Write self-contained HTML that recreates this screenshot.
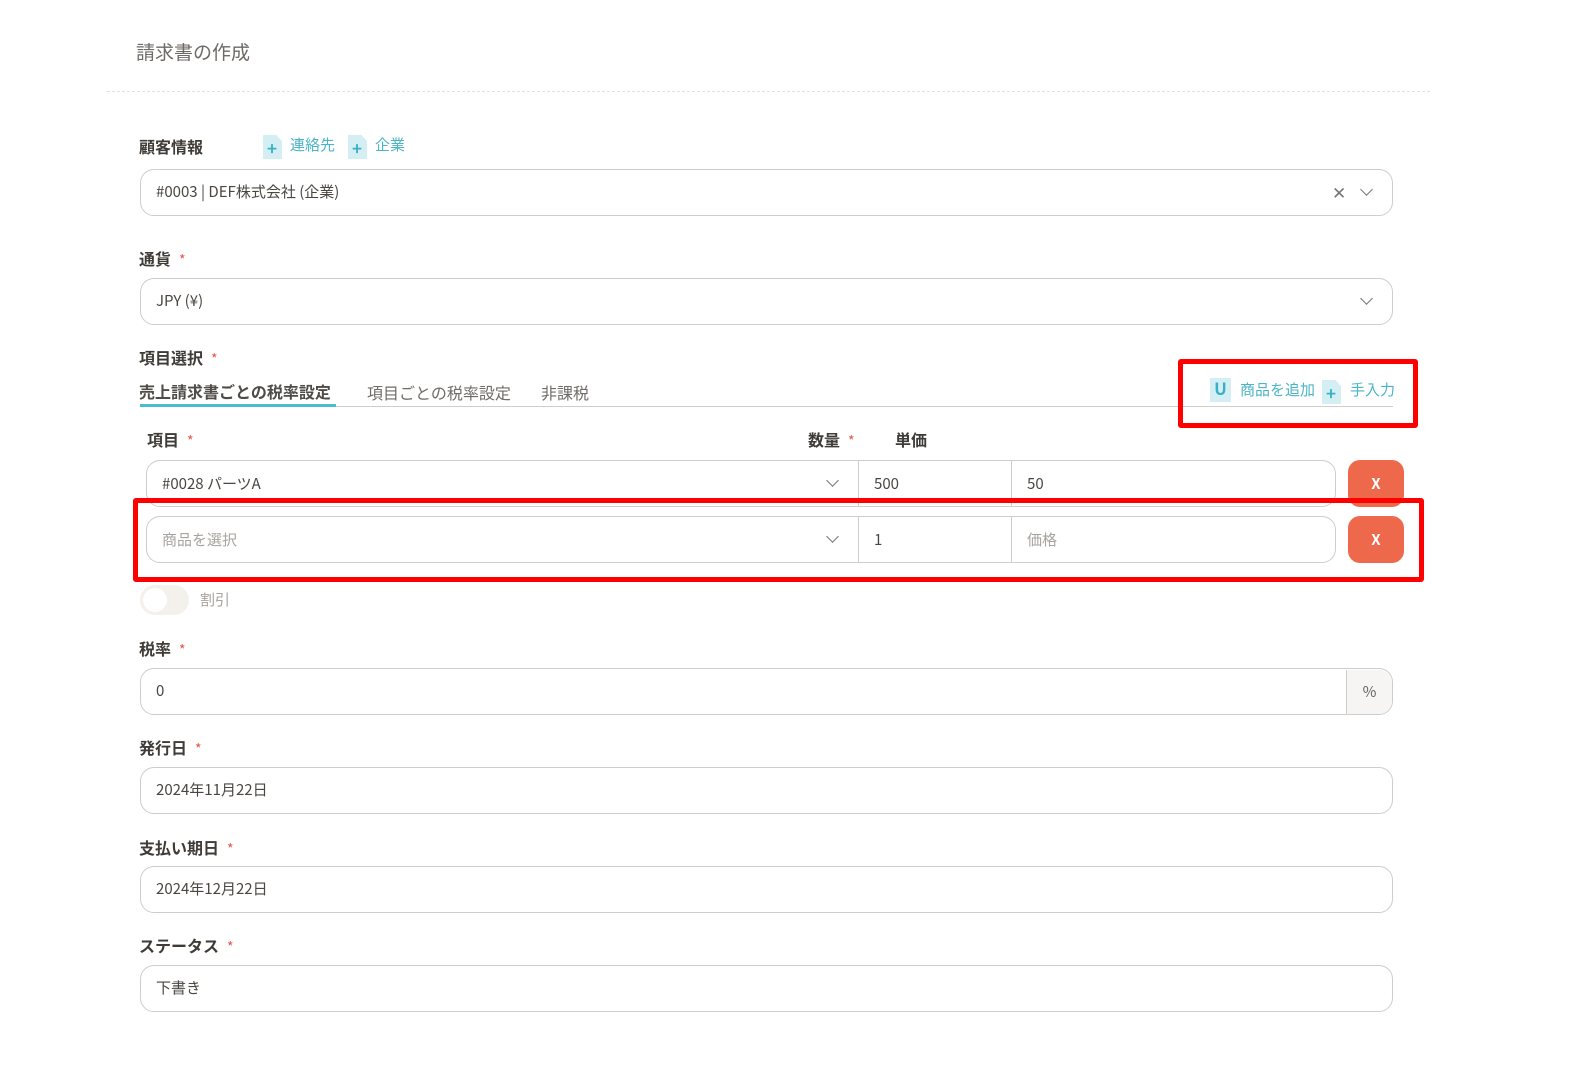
<!DOCTYPE html>
<html><head><meta charset="utf-8"><style>
*{box-sizing:border-box;margin:0;padding:0}
body{width:1576px;height:1084px;background:#fff;position:relative;overflow:hidden;font-family:"Noto Sans CJK JP","Liberation Sans",sans-serif;color:#4a4641}
.a{position:absolute;line-height:20px}
.lbl{position:absolute;font-size:16px;font-weight:bold;color:#3f3b37;line-height:20px}
.lbl i{font-style:normal;color:#e8524a;margin-left:8px;font-weight:normal;font-size:14px}
.inp{position:absolute;border:1.5px solid #cfcccc;border-radius:14px;height:47px;background:#fff;font-size:15px;line-height:44px;padding-left:15px;color:#4a4641}
.chev{position:absolute;width:9px;height:9px;border-right:1.8px solid #7a7570;border-bottom:1.8px solid #7a7570;transform:rotate(45deg)}
.xb{position:absolute;width:56px;height:47px;background:#ee694b;border-radius:12px;color:#fff;font-size:15px;font-weight:bold;text-align:center;line-height:47px}
.red{position:absolute;border:5px solid #f00;border-radius:3px}
.teal{color:#4bb5c7;font-size:15px}
.ico{position:absolute;width:19px;height:24px;background:#d3eff4;clip-path:polygon(0 0,70% 0,100% 25%,100% 100%,0 100%)}
.ico:after{content:"+";position:absolute;left:4px;top:1px;color:#3bb0c4;font-size:17px;font-weight:bold;line-height:24px}
</style></head><body>
<div class="a" style="left:136px;top:40px;font-size:19px;color:#6e6a66;line-height:24px">請求書の作成</div>
<div class="a" style="left:107px;top:91px;width:1323px;border-top:1px dashed #e3e1e1"></div>

<div class="lbl" style="left:139px;top:136px">顧客情報</div>
<div class="ico" style="left:263px;top:135px"></div>
<div class="a teal" style="left:290px;top:135px">連絡先</div>
<div class="ico" style="left:348px;top:135px"></div>
<div class="a teal" style="left:375px;top:135px">企業</div>
<div class="inp" style="left:140px;top:169px;width:1253px">#0003 | DEF株式会社 (企業)</div>
<div class="a" style="left:1332px;top:182px;font-size:17px;color:#7a7570">✕</div>
<div class="chev" style="left:1362px;top:185px"></div>

<div class="lbl" style="left:139px;top:248px">通貨<i>*</i></div>
<div class="inp" style="left:140px;top:278px;width:1253px">JPY (¥)</div>
<div class="chev" style="left:1362px;top:294px"></div>

<div class="lbl" style="left:139px;top:347px">項目選択<i>*</i></div>
<div class="a" style="left:140px;top:406px;width:1253px;border-top:1.5px solid #d0cdcc"></div>
<div class="a" style="left:139px;top:381px;font-size:16px;font-weight:bold;color:#4f4b47">売上請求書ごとの税率設定</div>
<div class="a" style="left:140px;top:404px;width:196px;height:3px;background:#4bbccc"></div>
<div class="a" style="left:367px;top:382px;font-size:16px;color:#6f6b67">項目ごとの税率設定</div>
<div class="a" style="left:541px;top:382px;font-size:16px;color:#6f6b67">非課税</div>
<div class="a" style="left:1210px;top:378px;width:21px;height:24px;background:#d3eff4;color:#3bb0c4;font-weight:bold;font-size:17px;text-align:center;line-height:20px">U</div>
<div class="a teal" style="left:1240px;top:380px">商品を追加</div>
<div class="ico" style="left:1322px;top:380px"></div>
<div class="a teal" style="left:1350px;top:380px">手入力</div>
<div class="red" style="left:1178px;top:359px;width:240px;height:69px"></div>

<div class="lbl" style="left:147px;top:429px">項目<i>*</i></div>
<div class="lbl" style="left:808px;top:429px">数量<i>*</i></div>
<div class="lbl" style="left:895px;top:429px">単価</div>

<div class="inp" style="left:146px;top:460px;width:1190px;padding:0"></div>
<div class="a" style="left:162px;top:474px;font-size:15px">#0028 パーツA</div>
<div class="chev" style="left:828px;top:476px"></div>
<div class="a" style="left:858px;top:461px;height:45px;border-left:1.5px solid #cfcccc"></div>
<div class="a" style="left:1011px;top:461px;height:45px;border-left:1.5px solid #cfcccc"></div>
<div class="a" style="left:874px;top:474px;font-size:15px">500</div>
<div class="a" style="left:1027px;top:474px;font-size:15px">50</div>
<div class="xb" style="left:1348px;top:460px">X</div>

<div class="inp" style="left:146px;top:516px;width:1190px;padding:0"></div>
<div class="a" style="left:162px;top:530px;font-size:15px;color:#a8a39e">商品を選択</div>
<div class="chev" style="left:828px;top:532px"></div>
<div class="a" style="left:858px;top:517px;height:45px;border-left:1.5px solid #cfcccc"></div>
<div class="a" style="left:1011px;top:517px;height:45px;border-left:1.5px solid #cfcccc"></div>
<div class="a" style="left:874px;top:530px;font-size:15px">1</div>
<div class="a" style="left:1027px;top:530px;font-size:15px;color:#a8a39e">価格</div>
<div class="xb" style="left:1348px;top:516px">X</div>
<div class="red" style="left:133px;top:498px;width:1291px;height:84px"></div>

<div class="a" style="left:140px;top:585px;width:49px;height:30px;border-radius:15px;background:#f4f1ec"></div>
<div class="a" style="left:143px;top:588px;width:24px;height:24px;border-radius:12px;background:#fff"></div>
<div class="a" style="left:200px;top:590px;font-size:15px;color:#a8a39e">割引</div>

<div class="lbl" style="left:139px;top:638px">税率<i>*</i></div>
<div class="inp" style="left:140px;top:668px;width:1253px;overflow:hidden">0</div>
<div class="a" style="left:1346px;top:670px;width:46px;height:44px;background:#f7f5f3;border-left:1.5px solid #cfcccc;border-radius:0 13px 13px 0;text-align:center;line-height:44px;font-size:15px;color:#666">%</div>

<div class="lbl" style="left:139px;top:737px">発行日<i>*</i></div>
<div class="inp" style="left:140px;top:767px;width:1253px">2024年11月22日</div>

<div class="lbl" style="left:139px;top:837px">支払い期日<i>*</i></div>
<div class="inp" style="left:140px;top:866px;width:1253px">2024年12月22日</div>

<div class="lbl" style="left:139px;top:935px">ステータス<i>*</i></div>
<div class="inp" style="left:140px;top:965px;width:1253px">下書き</div>
</body></html>
